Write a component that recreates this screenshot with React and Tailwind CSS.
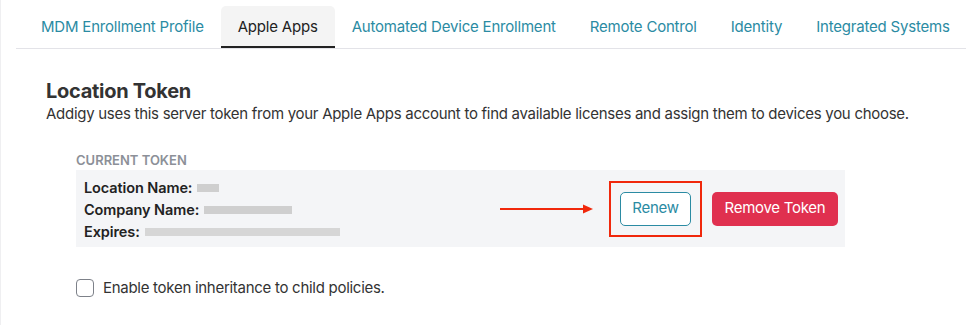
import React from "react";

const tabs = [
  "MDM Enrollment Profile",
  "Apple Apps",
  "Automated Device Enrollment",
  "Remote Control",
  "Identity",
  "Integrated Systems",
];

function Blur({ w, shade = "#cfcfcf" }) {
  return (
    <span
      className="inline-block h-[8px] blur-[0.6px] align-middle"
      style={{ width: w, background: shade }}
    />
  );
}

export default function App() {
  return (
    <div className="w-[966px] h-[325px] bg-white border-l border-[#efeff1] font-['Inter',sans-serif] text-[#333] overflow-hidden tracking-[-0.28px]">
      <div className="ml-[15px] pl-[8px] pt-[6px] flex border-b border-[#e3e3e8] tracking-[-0.2px]">
        {tabs.map((t) =>
          t === "Apple Apps" ? (
            <div
              key={t}
              className="h-[42px] px-[17px] flex items-center whitespace-nowrap text-[15px] text-[#222] bg-[#f4f4f4] rounded-t-[5px] border-b-2 border-[#222] pt-[2px]"
            >
              {t}
            </div>
          ) : (
            <div
              key={t}
              className="h-[42px] px-[17px] flex items-center whitespace-nowrap text-[15px] text-[#2b8ba3]"
            >
              {t}
            </div>
          )
        )}
      </div>

      <div className="pl-[45px] pt-[30px]">
        <h2 className="text-[20px] font-bold leading-[24px] text-[#333]">Location Token</h2>
        <p className="text-[15px] leading-[20px] text-[#333] mt-[1px]">
          Addigy uses this server token from your Apple Apps account to find available licenses and assign them to devices you choose.
        </p>

        <div className="ml-[30px] mt-[28px] w-[769px]">
          <div className="text-[13px] font-semibold tracking-[0px] text-[#8c9098] leading-[16px]">CURRENT TOKEN</div>
          <div className="mt-[2px] h-[77px] bg-[#f4f5f7] flex items-center justify-between pl-[8px] pr-[7px]">
            <div className="text-[14.5px] font-semibold leading-[22px] text-[#222] tracking-[-0.1px] pt-[2px]">
              <div className="flex items-center gap-[5px]">
                Location Name: <Blur w={22} />
              </div>
              <div className="flex items-center gap-[5px]">
                Company Name: <Blur w={88} />
              </div>
              <div className="flex items-center gap-[5px]">
                Expires: <Blur w={195} shade="#d6d6d6" />
              </div>
            </div>
            <div className="flex items-center">
              <svg width="93" height="12" viewBox="0 0 93 12" className="mr-[16px]">
                <line x1="0" y1="6" x2="84" y2="6" stroke="#f0280c" strokeWidth="2" />
                <polygon points="83,1.5 93,6 83,10.5" fill="#f0280c" />
              </svg>
              <div className="border-2 border-[#f0280c] p-[9px]">
                <button className="h-[34px] w-[71px] rounded-[5px] border border-[#2b8ba3] bg-white text-[15px] text-[#2b8ba3]">
                  Renew
                </button>
              </div>
              <button className="ml-[10px] h-[34px] w-[126px] rounded-[5px] bg-[#e0304f] text-[15px] text-white">
                Remove Token
              </button>
            </div>
          </div>

          <label className="mt-[30px] flex items-center gap-[9px] text-[15px] text-[#333]">
            <span className="w-[18px] h-[18px] rounded-[4px] border border-[#7d8189] bg-white" />
            Enable token inheritance to child policies.
          </label>
        </div>
      </div>
    </div>
  );
}
